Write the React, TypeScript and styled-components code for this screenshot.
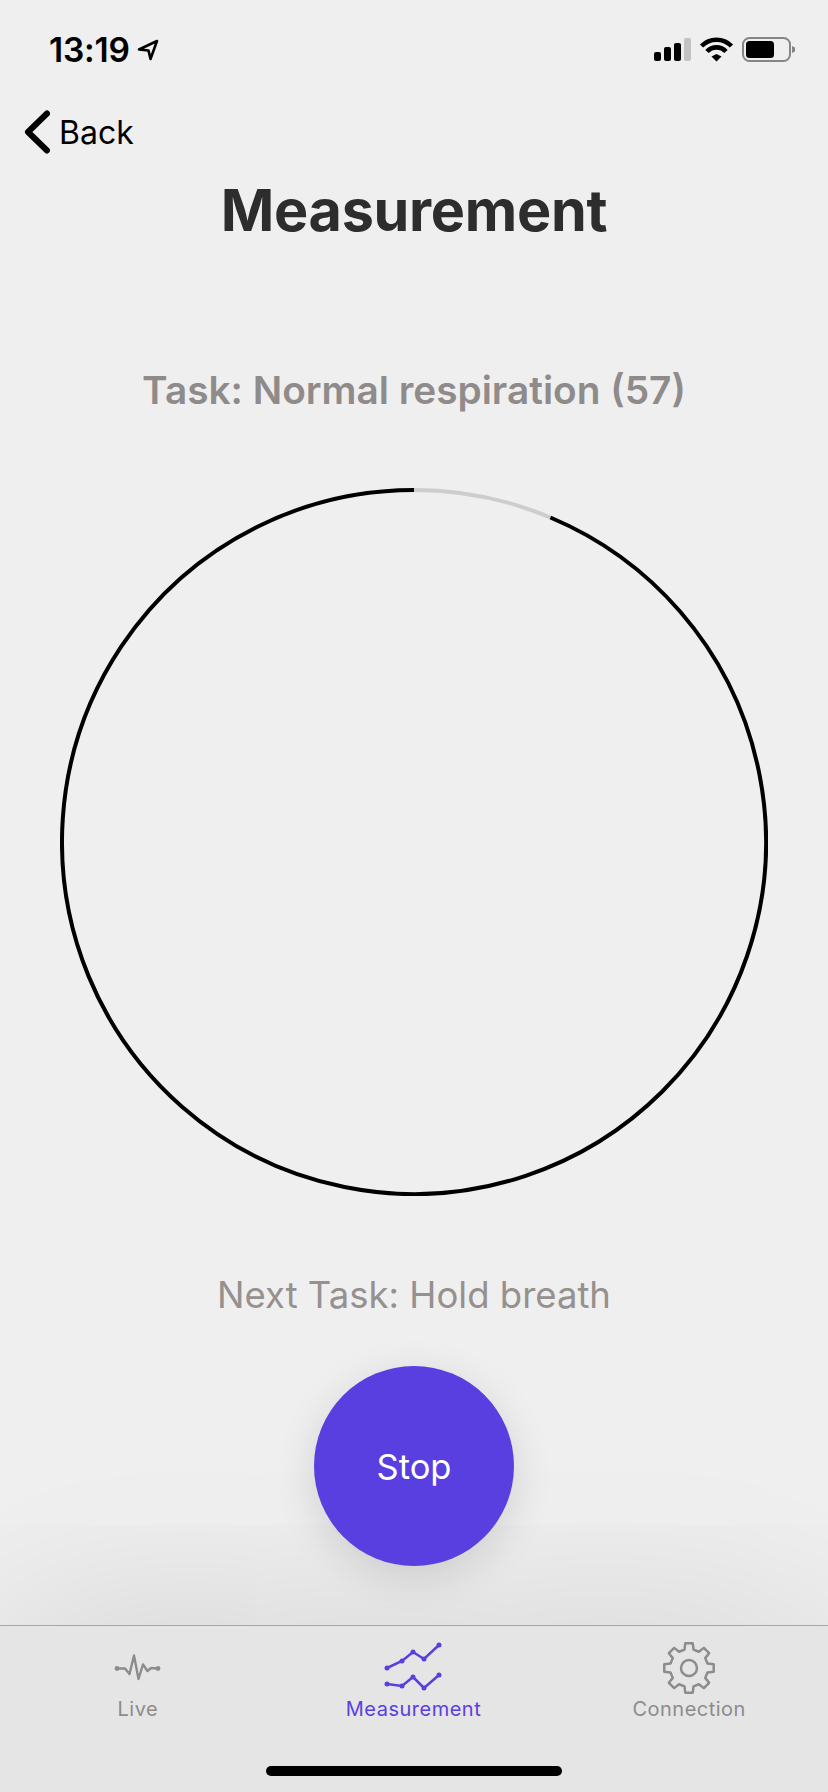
import React from "react";
import styled, { createGlobalStyle } from "styled-components";

const Global = createGlobalStyle`
  html, body { margin: 0; padding: 0; background: #efefef; }
  * { box-sizing: border-box; }
`;

const FONT = `Inter, "Liberation Sans", sans-serif`;

const Screen = styled.div`
  width: 828px;
  height: 1792px;
  display: flex;
  flex-direction: column;
  overflow: hidden;
  background: #efefef;
  font-family: ${FONT};
`;

const Main = styled.main`
  height: 1625px;
  display: flex;
  flex-direction: column;
  align-items: center;
`;

const StatusBar = styled.div`
  width: 100%;
  height: 100px;
  display: flex;
  align-items: center;
  justify-content: space-between;
  padding: 0 32px 0 49px;
`;

const StatusLeft = styled.div`
  display: flex;
  align-items: center;
  gap: 7px;
`;

const Time = styled.span`
  font-size: 33.5px;
  font-weight: 600;
  color: #000;
  letter-spacing: -0.2px;
`;

const StatusRight = styled.div`
  display: flex;
  align-items: center;
`;

const BackRow = styled.div`
  width: 100%;
  height: 64px;
  display: flex;
  align-items: center;
  gap: 9px;
  padding-left: 24px;
`;

const BackLabel = styled.span`
  font-size: 32px;
  font-weight: 400;
  color: #000;
`;

const Title = styled.h1`
  margin: 0;
  height: 92px;
  line-height: 92px;
  font-size: 57.5px;
  font-weight: 700;
  color: #2d2d2d;
  letter-spacing: -0.3px;
`;

const TaskLine = styled.div`
  margin-top: 104px;
  height: 60px;
  line-height: 60px;
  font-size: 38.8px;
  font-weight: 600;
  color: #908b8b;
`;

const Ring = styled.svg`
  display: block;
  margin-top: 68px;
`;

const NextLine = styled.div`
  margin-top: 69px;
  height: 60px;
  line-height: 60px;
  font-size: 36.5px;
  font-weight: 400;
  color: #96908f;
`;

const StopButton = styled.button`
  position: relative;
  z-index: 1;
  margin-top: 41px;
  width: 200px;
  height: 200px;
  border: none;
  border-radius: 50%;
  background: #5a3fe0;
  color: #fff;
  font-family: ${FONT};
  font-size: 34.5px;
  font-weight: 400;
  box-shadow: 0 10px 42px rgba(0, 0, 0, 0.12);
`;

const TabBar = styled.nav`
  position: relative;
  flex: 1;
  display: grid;
  grid-template-columns: repeat(3, 1fr);
  align-content: start;
  padding-right: 1px;
  background: #e5e5e5;
  border-top: 1.5px solid #a6a6a6;
  box-shadow: 0 0 190px rgba(0, 0, 0, 0.125);
`;

const Tab = styled.div<{ $active?: boolean }>`
  display: flex;
  flex-direction: column;
  align-items: center;
  padding-top: 16px;
  color: ${(p) => (p.$active ? "#5a3fe0" : "#8c8c8c")};
`;

const TabLabel = styled.span`
  margin-top: 3px;
  font-size: 20px;
  line-height: 24px;
  letter-spacing: 0.5px;
`;

const HomeBar = styled.div`
  position: absolute;
  left: 266px;
  bottom: 16px;
  width: 296px;
  height: 10px;
  border-radius: 5px;
  background: #000;
`;

const LocationIcon = () => (
  <svg width="22" height="22" viewBox="0 0 22 22" fill="none" stroke="#000" strokeWidth="2.6" strokeLinejoin="round">
    <path d="M2 10.5 L20 2 L13.5 20 L11.5 11.5 Z" />
  </svg>
);

const StatusIcons = () => (
  <svg width="142" height="26" viewBox="0 0 142 26">
    <rect x="0" y="15" width="7" height="9" rx="2" fill="#000" />
    <rect x="10" y="10" width="7" height="14" rx="2" fill="#000" />
    <rect x="20" y="6" width="7" height="18" rx="2" fill="#000" />
    <rect x="30" y="1" width="7" height="23" rx="2" fill="#c2c2c2" />
    <path d="M47.5 9 A 21 21 0 0 1 77.5 9" fill="none" stroke="#000" strokeWidth="4.6" />
    <path d="M53 14.5 A 13 13 0 0 1 72 14.5" fill="none" stroke="#000" strokeWidth="4.6" />
    <path d="M57.5 19.5 L62.5 17 L67.5 19.5 L62.5 24.5 Z" fill="#000" />
    <rect x="89" y="1" width="47" height="23" rx="6.5" fill="none" stroke="#858585" strokeWidth="2" />
    <rect x="92" y="4" width="28" height="17" rx="3.5" fill="#000" />
    <path d="M138 9 L141 10.5 V14.5 L138 16 Z" fill="#858585" />
  </svg>
);

const Chevron = () => (
  <svg width="26" height="44" viewBox="0 0 26 44" fill="none" stroke="#000" strokeWidth="6" strokeLinecap="round" strokeLinejoin="round">
    <path d="M23 3.5 L4 22 L23 40.5" />
  </svg>
);

const SIZE = 708;
const R = 352;
const C = 354;
const GAP_DEG = 22.8;
const gapX = C + R * Math.sin((GAP_DEG * Math.PI) / 180);
const gapY = C - R * Math.cos((GAP_DEG * Math.PI) / 180);

const ProgressRing = () => (
  <Ring width={SIZE} height={SIZE} viewBox={`0 0 ${SIZE} ${SIZE}`} fill="none" strokeWidth="4">
    <path d={`M${C} ${C - R} A ${R} ${R} 0 0 1 ${gapX} ${gapY}`} stroke="#cdcdcd" />
    <path d={`M${gapX} ${gapY} A ${R} ${R} 0 1 1 ${C} ${C - R}`} stroke="#000" />
  </Ring>
);

const LiveIcon = () => (
  <svg width="60" height="52" viewBox="0 0 60 52" fill="none" stroke="#8c8c8c" strokeWidth="2.4" strokeLinejoin="round">
    <path d="M9 26.5 H17 L21.5 32 L26 13.5 L30.5 37 L35 22.5 L39.5 29 L43 26 L50 26.5" />
    <circle cx="9" cy="26.5" r="2.4" fill="#8c8c8c" stroke="none" />
    <circle cx="50" cy="26.5" r="2.4" fill="#8c8c8c" stroke="none" />
  </svg>
);

const pts1: [number, number][] = [[4, 26], [19, 19], [30, 10], [41, 17], [56, 3]];
const pts2: [number, number][] = [[4, 42], [19, 44], [30, 35], [41, 46], [56, 33]];

const Series = ({ points }: { points: [number, number][] }) => (
  <>
    <polyline points={points.map((p) => p.join(",")).join(" ")} />
    {points.map(([x, y]) => (
      <circle key={x} cx={x} cy={y} r="2.5" fill="#5a3fe0" stroke="none" />
    ))}
  </>
);

const MeasureIcon = () => (
  <svg width="60" height="52" viewBox="0 0 60 52" fill="none" stroke="#5a3fe0" strokeWidth="2.5">
    <Series points={pts1} />
    <Series points={pts2} />
  </svg>
);

const gearPath = (() => {
  const cx = 26, cy = 26;
  const out = 25, inner = 19;
  const parts: string[] = [];
  for (let i = 0; i < 8; i++) {
    const a = (i * Math.PI) / 4 - Math.PI / 2;
    const P = (r: number, d: number) => {
      const t = a + d;
      return `${(cx + r * Math.cos(t)).toFixed(2)} ${(cy + r * Math.sin(t)).toFixed(2)}`;
    };
    parts.push(`${i === 0 ? "M" : "L"}${P(inner, -0.24)} L${P(out, -0.15)} L${P(out, 0.15)} L${P(inner, 0.24)}`);
  }
  return parts.join(" ") + " Z";
})();

const GearIcon = () => (
  <svg width="52" height="52" viewBox="0 0 52 52" fill="none" stroke="#8c8c8c" strokeWidth="2.5" strokeLinejoin="round">
    <path d={gearPath} />
    <circle cx="26" cy="26" r="8" />
  </svg>
);

export default function App() {
  return (
    <Screen>
      <Global />
      <Main>
        <StatusBar>
          <StatusLeft>
            <Time>13:19</Time>
            <LocationIcon />
          </StatusLeft>
          <StatusRight>
            <StatusIcons />
          </StatusRight>
        </StatusBar>
        <BackRow>
          <Chevron />
          <BackLabel>Back</BackLabel>
        </BackRow>
        <Title>Measurement</Title>
        <TaskLine>Task: Normal respiration (57)</TaskLine>
        <ProgressRing />
        <NextLine>Next Task: Hold breath</NextLine>
        <StopButton>Stop</StopButton>
      </Main>
      <TabBar>
        <Tab>
          <LiveIcon />
          <TabLabel>Live</TabLabel>
        </Tab>
        <Tab $active>
          <MeasureIcon />
          <TabLabel>Measurement</TabLabel>
        </Tab>
        <Tab>
          <GearIcon />
          <TabLabel>Connection</TabLabel>
        </Tab>
        <HomeBar />
      </TabBar>
    </Screen>
  );
}
